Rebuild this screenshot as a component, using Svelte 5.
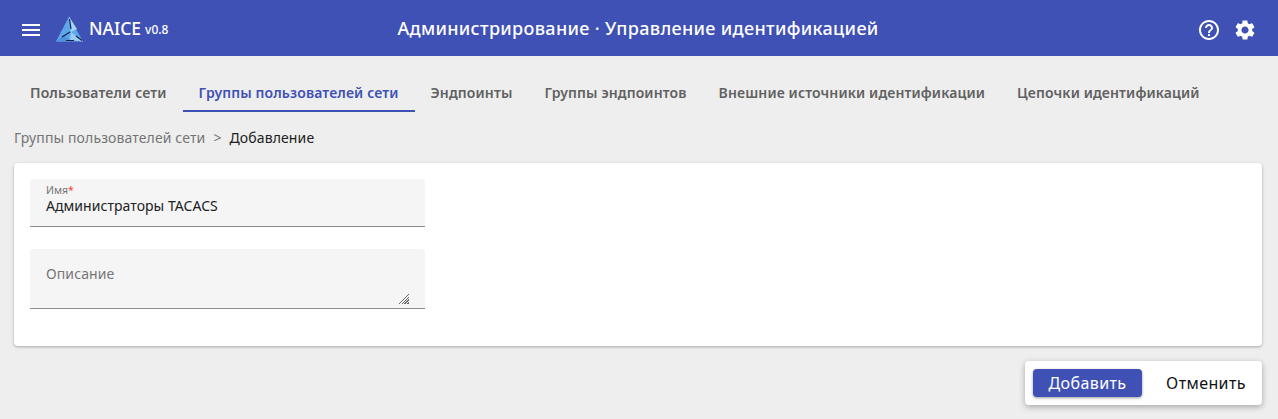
<script>
  const tabs = [
    "Пользователи сети",
    "Группы пользователей сети",
    "Эндпоинты",
    "Группы эндпоинтов",
    "Внешние источники идентификации",
    "Цепочки идентификаций",
  ];
  let active = $state(1);
  let name = $state("Администраторы TACACS");
  let description = $state("");
</script>

<div class="page">
  <header class="toolbar">
    <div class="brand">
      <button class="iconBtn menu" aria-label="Меню">
        <svg width="24" height="24" viewBox="0 0 24 24"><path fill="#fff" d="M3 18h18v-2H3v2zm0-5h18v-2H3v2zm0-7v2h18V6H3z" /></svg>
      </button>
      <svg class="logo" width="28" height="27" viewBox="0 0 28 27">
        <polygon points="13,1.5 27,26.5 0,26.5" fill="#5ea6ea" />
        <polygon points="13,1.5 21,14 15,17" fill="#a3d3f6" />
        <polygon points="0,26.5 8,20 15,26.5" fill="#4f93dc" />
        <polygon points="15,17 27,26.5 14,25" fill="#9ccdf3" />
        <path d="M13.5 4 L15 14 M6 22 L14 17 M20 21 L26 25.5 M10 25.5 L18 25.5" stroke="#14224f" stroke-width="1.2" fill="none" />
      </svg>
      <span class="name">NAICE</span>
      <span class="version">v0.8</span>
    </div>
    <div class="title">Администрирование · Управление идентификацией</div>
    <div class="actions">
      <button class="iconBtn" aria-label="Справка">
        <svg width="24" height="24" viewBox="0 0 24 24"><path fill="#fff" d="M11 18h2v-2h-2v2zm1-16C6.48 2 2 6.48 2 12s4.48 10 10 10 10-4.48 10-10S17.52 2 12 2zm0 18c-4.41 0-8-3.59-8-8s3.59-8 8-8 8 3.59 8 8-3.59 8-8 8zm0-14c-2.21 0-4 1.79-4 4h2c0-1.1.9-2 2-2s2 .9 2 2c0 2-3 1.75-3 5h2c0-2.25 3-2.5 3-5 0-2.21-1.79-4-4-4z" /></svg>
      </button>
      <button class="iconBtn" aria-label="Настройки">
        <svg width="24" height="24" viewBox="0 0 24 24"><path fill="#fff" d="M19.14 12.94c.04-.3.06-.61.06-.94 0-.32-.02-.64-.07-.94l2.03-1.58a.49.49 0 0 0 .12-.61l-1.92-3.32a.488.488 0 0 0-.59-.22l-2.39.96c-.5-.38-1.03-.7-1.62-.94l-.36-2.54a.484.484 0 0 0-.48-.41h-3.84c-.24 0-.43.17-.47.41l-.36 2.54c-.59.24-1.13.57-1.62.94l-2.39-.96c-.22-.08-.47 0-.59.22L2.74 8.87c-.12.21-.08.47.12.61l2.03 1.58c-.05.3-.09.63-.09.94s.02.64.07.94l-2.03 1.58a.49.49 0 0 0-.12.61l1.92 3.32c.12.22.37.29.59.22l2.39-.96c.5.38 1.03.7 1.62.94l.36 2.54c.05.24.24.41.48.41h3.84c.24 0 .44-.17.47-.41l.36-2.54c.59-.24 1.13-.56 1.62-.94l2.39.96c.22.08.47 0 .59-.22l1.92-3.32c.12-.22.07-.47-.12-.61l-2.01-1.58zM12 15.6c-1.98 0-3.6-1.62-3.6-3.6s1.62-3.6 3.6-3.6 3.6 1.62 3.6 3.6-1.62 3.6-3.6 3.6z" /></svg>
      </button>
    </div>
  </header>

  <nav class="tabs">
    {#each tabs as tab, i}
      <button class="tab" class:active={i === active} onclick={() => (active = i)}>{tab}</button>
    {/each}
  </nav>

  <div class="crumbs">
    <span class="crumb">Группы пользователей сети</span>
    <span class="sep">&gt;</span>
    <span class="current">Добавление</span>
  </div>

  <section class="card">
    <label class="field">
      <span class="floating">Имя<span class="req">*</span></span>
      <input bind:value={name} />
    </label>
    <label class="field area">
      <textarea placeholder="Описание" bind:value={description}></textarea>
    </label>
  </section>

  <footer class="footer">
    <div class="buttons">
      <button class="primary">Добавить</button>
      <button class="ghost">Отменить</button>
    </div>
  </footer>
</div>

<style>
  :global(body) {
    margin: 0;
    background: #eeeeee;
    font-family: "Noto Sans", sans-serif;
  }

  .page {
    height: 419px;
    overflow: hidden;
    background: #eeeeee;
  }

  button {
    font-family: inherit;
    border: none;
    background: none;
    cursor: pointer;
    padding: 0;
  }

  .toolbar {
    height: 56px;
    background: #3f51b5;
    color: #fff;
    display: grid;
    grid-template-columns: 1fr auto 1fr;
    align-items: center;
    padding: 0 21px 0 19px;
  }

  .brand {
    display: flex;
    align-items: center;
  }

  .iconBtn {
    display: flex;
    width: 24px;
    height: 24px;
  }

  .menu,
  .actions {
    margin-top: 3px;
  }

  .logo {
    margin: 0 5px 0 13px;
  }

  .name {
    font-size: 17.5px;
    font-weight: 500;
  }

  .version {
    font-size: 12px;
    font-weight: 500;
    margin-left: 4px;
    padding-top: 3px;
  }

  .title {
    font-size: 18px;
    font-weight: 500;
    letter-spacing: 0.33px;
  }

  .actions {
    display: flex;
    justify-content: flex-end;
    gap: 12px;
  }

  .tabs {
    display: flex;
    padding: 17px 14px 0;
    height: 39px;
  }

  .tab {
    padding: 2px 16px 0;
    height: 39px;
    font-size: 14px;
    font-weight: 600;
    letter-spacing: 0.13px;
    color: #616161;
    border-bottom: 2px solid transparent;
  }

  .tab.active {
    color: #3f51b5;
    border-bottom-color: #3f51b5;
  }

  .crumbs {
    display: flex;
    gap: 8px;
    margin: 16px 14px 0;
    font-size: 14px;
    line-height: 20px;
    letter-spacing: 0.12px;
    color: #757575;
  }

  .current {
    color: #212121;
  }

  .card {
    margin: 15px 16px 0 14px;
    height: 183px;
    box-sizing: border-box;
    padding: 16px;
    background: #fff;
    border-radius: 4px;
    box-shadow: 0 1px 3px rgba(0, 0, 0, 0.3);
  }

  .field {
    display: block;
    position: relative;
    width: 395px;
    box-sizing: border-box;
    background: #f5f5f5;
    border-radius: 4px 4px 0 0;
    border-bottom: 1px solid #8c8c8c;
  }

  .floating {
    position: absolute;
    left: 16px;
    top: 4px;
    font-size: 10.5px;
    line-height: 14px;
    color: #757575;
  }

  .req {
    color: #f44336;
  }

  input {
    display: block;
    width: 100%;
    height: 47px;
    box-sizing: border-box;
    padding: 5px 16px 0;
    border: none;
    outline: none;
    background: transparent;
    font: 14px "Noto Sans", sans-serif;
    letter-spacing: 0.05px;
    color: #212121;
  }

  .area {
    margin-top: 22px;
    padding: 15px 16px 4px;
  }

  textarea {
    display: block;
    box-sizing: border-box;
    width: 363px;
    height: 40px;
    margin: 0;
    padding: 0;
    border: none;
    outline: none;
    background: transparent;
    font: 14px/20px "Noto Sans", sans-serif;
    letter-spacing: 0.1px;
    color: #212121;
  }

  textarea::placeholder {
    color: #757575;
    opacity: 1;
  }

  textarea::-webkit-resizer {
    background:
      linear-gradient(135deg, #f5f5f5 50%, transparent 50%) right bottom / 11px 11px no-repeat,
      repeating-linear-gradient(135deg, #6a6a6a 0 1px, #f5f5f5 1px 2px) right bottom / 11px 11px no-repeat;
  }

  .footer {
    display: flex;
    justify-content: flex-end;
    margin: 15px 16px 0 0;
  }

  .buttons {
    display: flex;
    align-items: center;
    height: 44px;
    padding-left: 8px;
    background: #fff;
    border-radius: 4px;
    box-shadow: 0 2px 6px rgba(0, 0, 0, 0.3);
  }

  .buttons button {
    height: 28px;
    border-radius: 4px;
    font-size: 16px;
    letter-spacing: 0.4px;
  }

  .primary {
    width: 109px;
    background: #3f51b5;
    color: #fff;
    box-shadow: 0 1px 3px rgba(0, 0, 0, 0.4);
  }

  .ghost {
    width: 112px;
    margin-left: 8px;
    color: #111;
  }
</style>
